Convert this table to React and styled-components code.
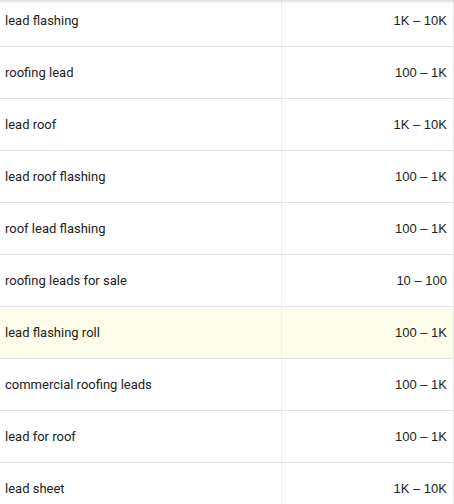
import React from "react";
import styled, { createGlobalStyle } from "styled-components";

const Global = createGlobalStyle`
  html, body { margin: 0; padding: 0; background: #fff; }
  body { width: 454px; height: 504px; overflow: hidden; }
`;

const Frame = styled.div`
  position: relative;
  width: 454px;
  height: 504px;
  overflow: hidden;
  background: #fff;
`;

const Shadow = styled.div`
  position: absolute;
  top: 0;
  left: 0;
  right: 0;
  height: 4px;
  background: linear-gradient(to bottom, rgba(0,0,0,0.13), rgba(0,0,0,0.0));
  pointer-events: none;
`;

const Table = styled.div`
  margin-top: -5px;
  width: 453px;
  border-right: 1px solid #e8e8e8;
  display: flex;
  flex-direction: column;
`;

const Row = styled.div`
  display: grid;
  grid-template-columns: 282px 1fr;
  height: 52px;
  box-sizing: border-box;
  border-bottom: 1px solid #e4e4e4;
  background: ${(p) => (p.$highlight ? "#fdfdea" : "#fff")};
`;

const Keyword = styled.div`
  display: flex;
  align-items: center;
  padding-left: 5px;
  font-family: Roboto, "Noto Sans", sans-serif;
  font-size: 13px;
  color: #222;
  border-right: 1px solid #efefef;
`;

const Volume = styled.div`
  display: flex;
  align-items: center;
  justify-content: flex-end;
  padding-right: 6px;
  font-family: "Liberation Sans", Arial, sans-serif;
  font-size: 13px;
  color: #222;
`;

const rows = [
  ["lead flashing", "1K – 10K"],
  ["roofing lead", "100 – 1K"],
  ["lead roof", "1K – 10K"],
  ["lead roof flashing", "100 – 1K"],
  ["roof lead flashing", "100 – 1K"],
  ["roofing leads for sale", "10 – 100"],
  ["lead flashing roll", "100 – 1K", true],
  ["commercial roofing leads", "100 – 1K"],
  ["lead for roof", "100 – 1K"],
  ["lead sheet", "1K – 10K"],
];

export default function App() {
  return (
    <>
      <Global />
      <Frame>
        <Table>
          {rows.map(([k, v, h]) => (
            <Row key={k} $highlight={h}>
              <Keyword>{k}</Keyword>
              <Volume>{v}</Volume>
            </Row>
          ))}
        </Table>
        <Shadow />
      </Frame>
    </>
  );
}
